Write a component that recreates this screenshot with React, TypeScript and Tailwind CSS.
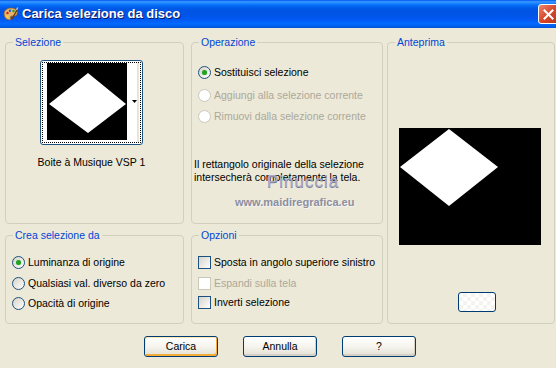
function Radio({ label, checked, disabled }: { label: string; checked?: boolean; disabled?: boolean }) {
  return (
    <div className="flex items-center h-[13px]">
      <span
        className={
          disabled
            ? "w-[13px] h-[13px] rounded-full border border-[#cac8bb] bg-white flex items-center justify-center shrink-0"
            : "w-[13px] h-[13px] rounded-full border border-[#1c5180] bg-linear-to-br from-[#d6d3c8] to-white flex items-center justify-center shrink-0"
        }
      >
        {checked && <span className="w-[5px] h-[5px] rounded-full bg-[#21a121] shadow-[0_0_1px_#8fd18f]" />}
      </span>
      <span className={disabled ? "ml-[3px] text-[#aca899] whitespace-nowrap" : "ml-[3px] text-black whitespace-nowrap"}>{label}</span>
    </div>
  );
}

function Check({ label, disabled }: { label: string; disabled?: boolean }) {
  return (
    <div className="flex items-center h-[13px]">
      <span
        className={
          disabled
            ? "w-[13px] h-[13px] border border-[#cac8bb] bg-white shrink-0"
            : "w-[13px] h-[13px] border border-[#1c5180] bg-linear-to-br from-[#d6d3c8] to-white shrink-0"
        }
      />
      <span className={disabled ? "ml-[3px] text-[#aca899] whitespace-nowrap" : "ml-[3px] text-black whitespace-nowrap"}>{label}</span>
    </div>
  );
}

function Group({ title, className, children }: { title: string; className: string; children: React.ReactNode }) {
  return (
    <fieldset className={"border border-[#d0d0bf] rounded-[4px] " + className}>
      <legend className="ml-[7px] px-[2px] text-[#0046d5] leading-[13px]">{title}</legend>
      {children}
    </fieldset>
  );
}

function XpButton({ label, primary }: { label: string; primary?: boolean }) {
  return (
    <button
      className={
        primary
          ? "w-[74px] h-[21px] rounded-[3px] border border-[#003c74] bg-linear-to-b from-white via-[#f5f4ee] to-[#e3e0d3] shadow-[inset_1px_1px_0_#ffe9b0,inset_-1px_-2px_0_#f4ad39] text-black leading-[13px]"
          : "w-[74px] h-[21px] rounded-[3px] border border-[#003c74] bg-linear-to-b from-white via-[#f5f4ee] to-[#e3e0d3] shadow-[inset_-1px_-2px_0_#d6d0c5] text-black leading-[13px]"
      }
    >
      {label}
    </button>
  );
}

function PaletteIcon() {
  return (
    <svg width="16" height="16" viewBox="0 0 16 16">
      <path d="M8 2C4 2 1 4.5 1 8c0 3 2 5.5 5 6 1.5.2 2-1 1.5-2-.5-1 .3-2 1.5-1.8 2.5.4 5.5-.5 5.5-3.7C14.5 4 11.5 2 8 2z" fill="#e8b46a" stroke="#8a5a20" strokeWidth="0.8" />
      <circle cx="4.5" cy="7" r="1.2" fill="#d62020" />
      <circle cx="7" cy="4.8" r="1.2" fill="#2060e0" />
      <circle cx="10.5" cy="5" r="1.2" fill="#20a030" />
      <circle cx="4.5" cy="10.5" r="1.1" fill="#f0e020" />
      <path d="M9 13l5-9" stroke="#6b3b10" strokeWidth="1.5" />
      <path d="M13.5 4l1.2-2.5" stroke="#c0c0c0" strokeWidth="1.5" />
    </svg>
  );
}

export default function App() {
  return (
    <div className="w-[556px] h-[368px] bg-[#ece9d8] overflow-hidden text-[10.5px] font-['Liberation_Sans',Arial,sans-serif]">
      <div className="h-[28px] flex items-center bg-[linear-gradient(180deg,#0058ee_0%,#3593ff_6%,#288eff_10%,#127dff_14%,#036ffc_18%,#0262ee_24%,#0057e5_32%,#0054e3_40%,#0055eb_60%,#005bf5_72%,#026afe_84%,#0062ef_92%,#0052d6_100%)]">
        <div className="ml-[3px] mt-[-1px]">
          <PaletteIcon />
        </div>
        <span className="ml-[3px] text-white font-bold text-[13px] [text-shadow:1px_1px_#0a1864] whitespace-nowrap">
          Carica selezione da disco
        </span>
        <div className="ml-auto mr-[-3px] w-[21px] h-[20px] rounded-[3px] border border-white bg-linear-to-br from-[#e9866a] via-[#d8472a] to-[#b8361a] flex items-center justify-center">
          <svg width="11" height="11" viewBox="0 0 11 11">
            <path d="M1.5 1.5l8 8M9.5 1.5l-8 8" stroke="white" strokeWidth="2" strokeLinecap="square" />
          </svg>
        </div>
      </div>

      <div className="flex pl-[5px] pt-[8px]">
        <div className="w-[179px] flex flex-col">
          <Group title="Selezione" className="h-[188px]">
            <div className="ml-[34px] mt-[11px] w-[103px] flex flex-col items-center">
              <div className="w-[103px] h-[85px] rounded-[3px] border border-[#1c5180] bg-white p-[1px]">
                <div className="w-full h-full border border-dotted border-black flex">
                  <div className="w-[4px]" />
                  <svg width="80" height="77" viewBox="0 0 80 77" className="block">
                    <rect width="80" height="77" fill="black" />
                    <polygon points="2,41 41,10 79,41 41,70" fill="white" />
                  </svg>
                  <div className="w-[10px] h-full flex items-center justify-end pb-[3px]">
                    <svg width="5" height="3" viewBox="0 0 5 3">
                      <polygon points="0,0 5,0 2.5,3" fill="black" />
                    </svg>
                  </div>
                  <div className="w-[2px] h-full bg-[#e8e6dc]" />
                </div>
              </div>
              <div className="mt-[11px] leading-[13px] whitespace-nowrap">Boite à Musique VSP 1</div>
            </div>
          </Group>
          <Group title="Crea selezione da" className="h-[95px] mt-[5px]">
            <div className="ml-[6px] mt-[14px] flex flex-col">
              <Radio label="Luminanza di origine" checked />
              <div className="mt-[8px]">
                <Radio label="Qualsiasi val. diverso da zero" />
              </div>
              <div className="mt-[7px]">
                <Radio label="Opacità di origine" />
              </div>
            </div>
          </Group>
        </div>

        <div className="w-[192px] ml-[7px] flex flex-col">
          <Group title="Operazione" className="h-[188px]">
            <div className="ml-[6px] mt-[17px] flex flex-col">
              <Radio label="Sostituisci selezione" checked />
              <div className="mt-[10px]">
                <Radio label="Aggiungi alla selezione corrente" disabled />
              </div>
              <div className="mt-[8px]">
                <Radio label="Rimuovi dalla selezione corrente" disabled />
              </div>
            </div>
            <div className="relative ml-[2px] mt-[35px] leading-[13px]">
              <div>Il rettangolo originale della selezione</div>
              <div>intersecherà completamente la tela.</div>
              <div className="absolute left-[73px] top-[16px] text-[17px] leading-[16px] tracking-[1px] text-[#a9abc9] [text-shadow:0_1px_0_#7a7c99] whitespace-nowrap">
                Pinuccia
              </div>
              <div className="absolute left-[41px] top-[38px] text-[11px] font-bold leading-[13px] text-[#8e8e9e] [text-shadow:1px_1px_0_#f4f4f4] whitespace-nowrap">
                www.maidiregrafica.eu
              </div>
            </div>
          </Group>
          <Group title="Opzioni" className="h-[95px] mt-[5px]">
            <div className="ml-[6px] mt-[14px] flex flex-col">
              <Check label="Sposta in angolo superiore sinistro" />
              <div className="mt-[8px]">
                <Check label="Espandi sulla tela" disabled />
              </div>
              <div className="mt-[6px]">
                <Check label="Inverti selezione" />
              </div>
            </div>
          </Group>
        </div>

        <div className="w-[168px] ml-[4px]">
          <Group title="Anteprima" className="h-[288px]">
            <div className="flex flex-col items-center">
              <svg width="142" height="117" viewBox="0 0 142 117" className="block mt-[79px] ml-[-2px]">
                <rect width="142" height="117" fill="black" />
                <polygon points="1,39 50,1 99,39 50,78" fill="white" />
              </svg>
              <div className="mt-[47px] ml-[12px] w-[38px] h-[20px] rounded-[3px] border border-[#003c74] bg-[repeating-conic-gradient(#f4f3ee_0%_25%,#ffffff_0%_50%)] bg-[length:8px_8px]" />
            </div>
          </Group>
        </div>
      </div>

      <div className="flex justify-center gap-[25px] pl-[4px] mt-[12px]">
        <XpButton label="Carica" primary />
        <XpButton label="Annulla" />
        <XpButton label="?" />
      </div>
    </div>
  );
}
